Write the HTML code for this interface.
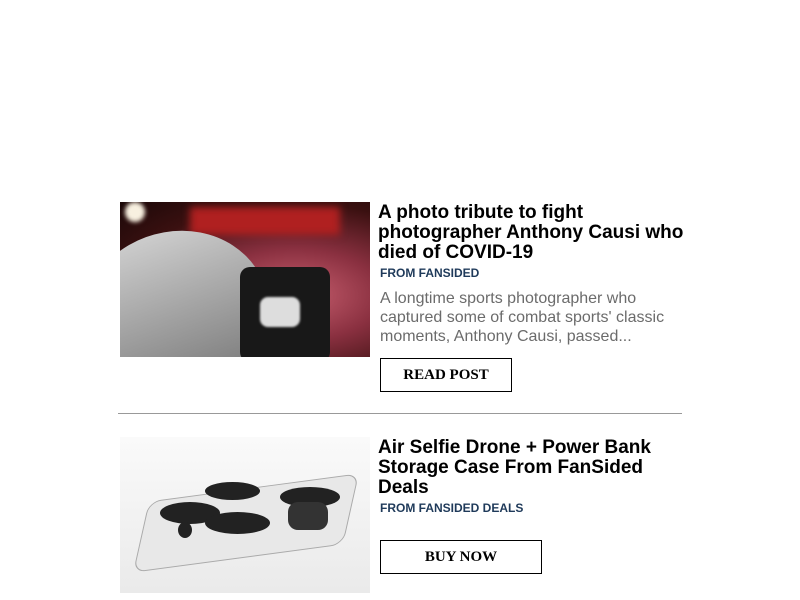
<!DOCTYPE html>
<html><head><style>
body{margin:0;width:800px;height:600px;background:#fff;position:relative;overflow:hidden;font-family:"Liberation Sans",Arial,sans-serif}
.a{position:absolute}
.t{font-weight:bold;font-size:19px;line-height:20px;color:#000;left:378px;width:312px}
.f{font-weight:bold;font-size:12px;color:#1f3a5a;left:380px}
.d{font-size:16px;line-height:19px;color:#6b6b6b;left:380px;width:300px}
.b{border:1px solid #000;font-family:"Liberation Serif",serif;font-weight:bold;font-size:15px;text-align:center;box-sizing:border-box;left:380px}
</style></head><body>
<div class="a" style="left:120px;top:202px;width:250px;height:155px;overflow:hidden;background:radial-gradient(ellipse at 70% 60%,#c96070 0%,#8a3040 35%,#3a1010 70%,#1a0808 100%)">
<div class="a" style="left:70px;top:5px;width:150px;height:28px;background:#b02020;filter:blur(4px)"></div>
<div class="a" style="left:5px;top:0;width:20px;height:20px;border-radius:50%;background:#f8f0e0;filter:blur(2px)"></div>
<div class="a" style="left:-40px;top:30px;width:190px;height:170px;border-radius:50%;background:linear-gradient(#ccc,#777);transform:rotate(-20deg)"></div>
<div class="a" style="left:120px;top:65px;width:90px;height:95px;background:#181818;border-radius:10px"></div>
<div class="a" style="left:140px;top:95px;width:40px;height:30px;background:#ddd;border-radius:8px;filter:blur(1px)"></div>
</div>
<div class="a t" style="top:203px">A photo tribute to fight photographer Anthony Causi who died of COVID-19</div>
<div class="a f" style="top:266px">FROM FANSIDED</div>
<div class="a d" style="top:289px">A longtime sports photographer who captured some of combat sports' classic moments, Anthony Causi, passed...</div>
<div class="a b" style="top:358px;width:132px;height:34px;line-height:33px">READ POST</div>
<div class="a" style="left:118px;top:413px;width:564px;height:1px;background:#999"></div>
<div class="a" style="left:120px;top:437px;width:250px;height:156px;background:linear-gradient(#fafafa,#eaeaea)">
<div class="a" style="left:25px;top:50px;width:200px;height:70px;background:#e8e8e8;border:1px solid #aaa;border-radius:12px;transform:skewX(-20deg) rotate(-8deg)"></div>
<div class="a" style="left:85px;top:45px;width:55px;height:18px;border-radius:50%;background:#222"></div>
<div class="a" style="left:160px;top:50px;width:60px;height:20px;border-radius:50%;background:#222"></div>
<div class="a" style="left:40px;top:65px;width:60px;height:22px;border-radius:50%;background:#222"></div>
<div class="a" style="left:85px;top:75px;width:65px;height:22px;border-radius:50%;background:#222"></div>
<div class="a" style="left:58px;top:85px;width:14px;height:16px;border-radius:50%;background:#222"></div>
<div class="a" style="left:168px;top:65px;width:40px;height:28px;border-radius:10px;background:#333"></div>
</div>
<div class="a t" style="top:438px">Air Selfie Drone + Power Bank Storage Case From FanSided Deals</div>
<div class="a f" style="top:501px">FROM FANSIDED DEALS</div>
<div class="a b" style="top:540px;width:162px;height:34px;line-height:33px">BUY NOW</div>
</body></html>
